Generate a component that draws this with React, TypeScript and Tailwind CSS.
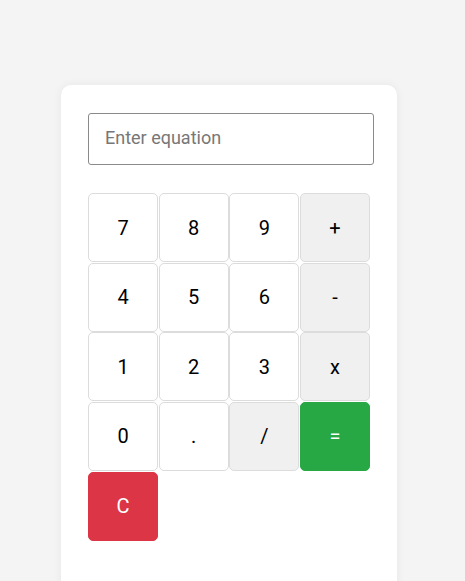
import React, { useState } from "react";

const keys = [
  { label: "7", kind: "num" },
  { label: "8", kind: "num" },
  { label: "9", kind: "num" },
  { label: "+", kind: "op" },
  { label: "4", kind: "num" },
  { label: "5", kind: "num" },
  { label: "6", kind: "num" },
  { label: "-", kind: "op" },
  { label: "1", kind: "num" },
  { label: "2", kind: "num" },
  { label: "3", kind: "num" },
  { label: "x", kind: "op" },
  { label: "0", kind: "num" },
  { label: ".", kind: "num" },
  { label: "/", kind: "op" },
  { label: "=", kind: "eq" },
  { label: "C", kind: "clear" },
];

const styles: Record<string, string> = {
  num: "bg-white text-black border-[#dcdcdc]",
  op: "bg-[#f0f0f0] text-black border-[#dcdcdc]",
  eq: "bg-[#28a745] text-white border-[#28a745]",
  clear: "bg-[#dc3545] text-white border-[#dc3545]",
};

export default function App() {
  const [value, setValue] = useState("");

  return (
    <div className="min-h-[581px] bg-[#f4f4f4] flex pl-[61px] pt-[85px] font-['Roboto',sans-serif]">
      <div className="w-[336px] h-[520px] bg-white rounded-[10px] shadow-[0_0_10px_rgba(0,0,0,0.06)] pl-[27px] pr-[23px] pt-[28px]">
        {/* display */}
        <input
          value={value}
          onChange={(e) => setValue(e.target.value)}
          placeholder="Enter equation"
          className="w-[286px] h-[52px] border border-[#8a8a8a] rounded-[3px] px-4 pb-[4px] text-[18px] text-black placeholder:text-[#777] outline-none"
        />

        {/* keypad */}
        <div className="mt-[28px] grid grid-cols-[repeat(4,70px)] gap-x-[0.67px] gap-y-[0.67px] w-[283px]">
          {keys.map((k) => (
            <button
              key={k.label}
              onClick={() => {
                if (k.kind === "clear") setValue("");
                else if (k.kind !== "eq") setValue(value + k.label);
              }}
              className={`h-[69px] border rounded-[5px] text-[20px] flex items-center justify-center ${styles[k.kind]}`}
            >
              {k.label}
            </button>
          ))}
        </div>
      </div>
    </div>
  );
}
